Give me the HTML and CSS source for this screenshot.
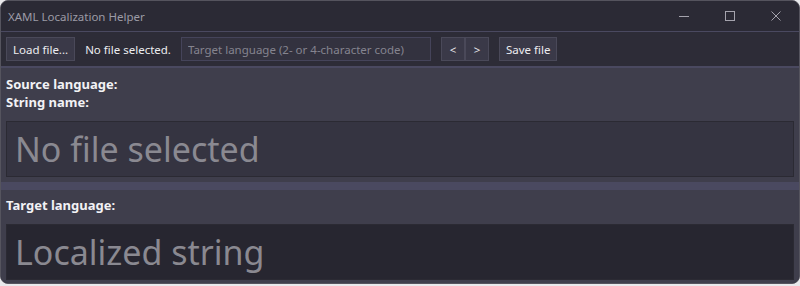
FILE: index.html
```html
<!DOCTYPE html>
<html lang="en">
  <head>
    <title>XAML Localization Helper</title>
    <meta charset="utf-8" />
    <link rel="stylesheet" href="styles.css">
  </head>
  <body>
    <div class="window">
      <div class="titlebar">
        <span class="title">XAML Localization Helper</span>
        <div class="caption">
          <span class="capbtn"><svg width="12" height="12" viewBox="0 0 12 12"><path d="M1 6.5h10" stroke="#a4a3ad" stroke-width="1" fill="none"/></svg></span>
          <span class="capbtn"><svg width="12" height="12" viewBox="0 0 12 12"><rect x="1.5" y="1.5" width="9" height="9" stroke="#a4a3ad" stroke-width="1" fill="none"/></svg></span>
          <span class="capbtn"><svg width="12" height="12" viewBox="0 0 12 12"><path d="M1.5 1.5l9 9M10.5 1.5l-9 9" stroke="#a4a3ad" stroke-width="1" fill="none"/></svg></span>
        </div>
      </div>
      <div class="toolbar">
        <button class="btn">Load file...</button>
        <span class="status">No file selected.</span>
        <input class="lang" type="text" placeholder="Target language (2- or 4-character code)" />
        <div class="nav">
          <button class="btn small">&lt;</button><button class="btn small">&gt;</button>
        </div>
        <button class="btn">Save file</button>
      </div>
      <div class="pane">
        <div class="label">Source language:</div>
        <div class="label">String name:</div>
        <div class="bigbox source">No file selected</div>
      </div>
      <div class="splitter"></div>
      <div class="pane target-pane">
        <div class="label">Target language:</div>
        <div class="bigbox target">Localized string</div>
      </div>
    </div>
  </body>
</html>
```

FILE: styles.css
```css
html, body {
  margin: 0;
  padding: 0;
}

body {
  background: #e9e9ec;
  font-family: "Noto Sans", "Open Sans", sans-serif;
  font-size: 11.5px;
}

.window {
  width: 800px;
  height: 284px;
  box-sizing: border-box;
  border: 1px solid #55545e;
  border-radius: 8px;
  background: #2d2c37;
  overflow: hidden;
  display: flex;
  flex-direction: column;
}

.titlebar {
  flex: none;
  height: 30px;
  display: flex;
  align-items: center;
  justify-content: space-between;
  background: #2b2a35;
  border-bottom: 1px solid #4a4960;
}

.title {
  padding-left: 7px;
  color: #9c9ba6;
  font-size: 11.5px;
}

.caption {
  display: flex;
}

.capbtn {
  width: 46px;
  height: 30px;
  display: flex;
  align-items: center;
  justify-content: center;
}

.toolbar {
  flex: none;
  height: 34px;
  display: flex;
  align-items: center;
  padding: 0 5px;
  background: #2d2c37;
  border-bottom: 2px solid #4a4960;
}

.btn {
  height: 24px;
  padding: 0 6px;
  background: #3a3948;
  border: 1px solid #4a4959;
  color: #ececf0;
  font-family: inherit;
  font-size: 11.5px;
}

.status {
  margin: 0 10px;
  color: #ececf0;
}

.lang {
  width: 250px;
  height: 24px;
  box-sizing: border-box;
  padding: 0 6px;
  background: #33323f;
  border: 1px solid #45445a;
  color: #ececf0;
  font-family: inherit;
  font-size: 11.5px;
}

.lang::placeholder {
  color: #85848f;
}

.nav {
  display: flex;
  margin: 0 10px;
}

.small {
  width: 24px;
  padding: 0;
}

.pane {
  flex: none;
  background: #3f3e4c;
  padding: 7px 5px 5px 5px;
}

.label {
  color: #f2f2f5;
  font-weight: bold;
  font-size: 13px;
  line-height: 18px;
}

.bigbox {
  margin-top: 10px;
  height: 56px;
  box-sizing: border-box;
  padding: 0 8px;
  display: flex;
  align-items: center;
  font-size: 34px;
  color: #8a8991;
  border: 1px solid #2b2a33;
}

.source {
  background: #353441;
}

.splitter {
  flex: none;
  height: 8px;
  background: #4a4960;
}

.target-pane {
  flex: 1;
  padding-top: 6px;
}

.target {
  background: #272630;
}
```
